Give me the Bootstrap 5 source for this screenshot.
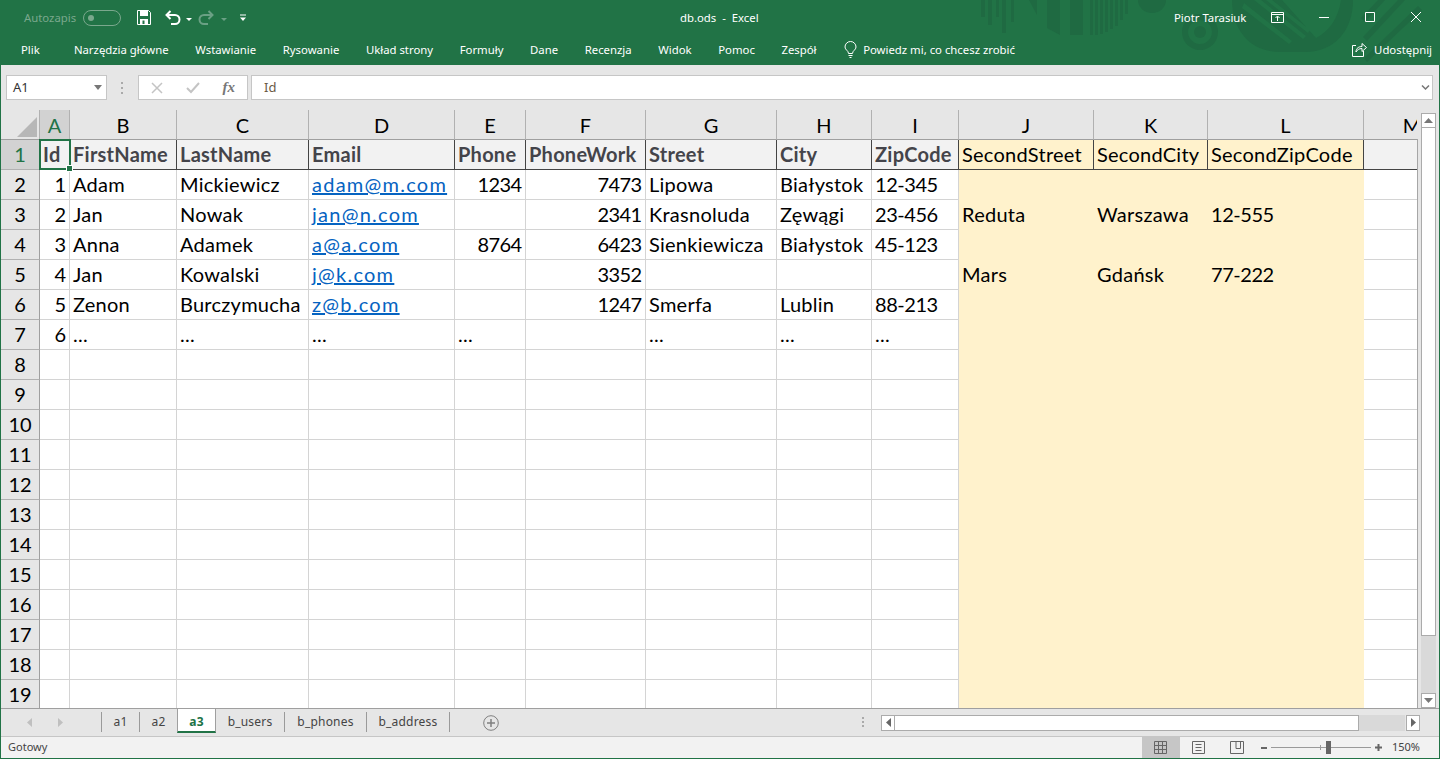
<!DOCTYPE html>
<html lang="pl"><head><meta charset="utf-8"><title>db.ods - Excel</title>
<link href="https://cdn.jsdelivr.net/npm/bootstrap@5.3.0/dist/css/bootstrap.min.css" rel="stylesheet">
<style>
html,body{height:759px;overflow:hidden;margin:0}
body{background:#e6e6e6;font-family:"Noto Sans","Open Sans",sans-serif;font-size:11.35px;color:#444}
.win{height:759px;width:1440px;border:solid #217346;border-width:0 1px 1px 1px;display:flex;flex-direction:column;overflow:hidden}
.greenbar{background:#217346;color:#fff;height:65px;margin:0 -1px;position:relative;flex:none}
.deco{position:absolute;left:960px;top:0}
.ttl{height:35px;position:relative;padding-left:24px;padding-right:19px}
.ttl .mid{position:absolute;left:680px;top:9px;white-space:pre}
.rib{height:30px;position:relative;padding-left:21px;gap:26.6px;padding-right:8px}
.rib .plik{margin-right:7.5px}
.tell{margin-left:1px}
.tell svg{margin-right:2px}
.aut{color:#7aa88d}
.sw{width:38px;height:16px;border:1px solid #7aa88d;border-radius:8px;position:relative;margin-left:7px}
.sw i{position:absolute;left:4px;top:4px;width:6px;height:6px;border-radius:50%;background:#7aa88d}
.i-save{margin-left:16px}
.i-undo{margin-left:14px}
.i-redo{margin-left:4px}
.i-more{margin-left:12px}
.rgt{gap:0}
.who{width:97px}
.ico-gap1{margin-left:35px}
.ico-gap2{margin-left:36px}
.share{gap:7px}
.fbar{height:45px;flex:none;padding:10px 6px 10px 5px}
.fbx{background:#fff;border:1px solid #c6c6c6;height:25px;font-size:13px;color:#333}
.nm{width:101px;padding:0 4px 0 6px}
.dotsep{width:31px}
.fxs{width:110px;padding:0 12px 0 12px}
.fx{font-family:"Liberation Serif",serif;font-style:italic;font-weight:700;color:#777;font-size:15px}
.finp{flex:1;padding-left:12px;padding-right:2px;color:#6b5a45;margin-left:3px}
.sheetarea{height:598px;flex:none;position:relative;overflow:hidden;background:#fff}
.gt{table-layout:fixed;border-collapse:separate;border-spacing:0;width:1460px;font-family:Lato,sans-serif;font-size:20px;color:#000;letter-spacing:.25px}
.gt td,.gt th{height:30px;padding:0 3px;border-right:1px solid #d4d4d4;border-bottom:1px solid #d4d4d4;line-height:29px;white-space:nowrap;overflow:hidden;font-weight:400;box-sizing:border-box}
.gt thead th{height:30px;background:#e6e6e6;border-right:1px solid #b1b1b1;border-bottom:1px solid #9f9f9f;text-align:center;line-height:28px;padding:0;position:relative;letter-spacing:0}
.gt thead th.ac{background:#d2d2d2;color:#217346;border-bottom:1px solid #217346}
.gt .rh{background:#e6e6e6;border-right:1px solid #9f9f9f;border-bottom:1px solid #b1b1b1;text-align:center;padding:0;font-weight:400;letter-spacing:0}
.gt .rh.ac{background:#d2d2d2;color:#217346;border-right:1px solid #217346}
.tri{position:absolute;right:2px;bottom:2px;width:0;height:0;border-style:solid;border-width:0 0 20px 20px;border-color:transparent transparent #b7b7b7 transparent}
.gt .hd{background:#f2f2f2;font-weight:700;color:#44444a;border-right:1px solid #444;border-bottom:1px solid #444}
.gt .hy{background:#fff2cc;color:#000;font-weight:400;border-right:1px solid #444;border-bottom:1px solid #444}
.gt .hb{background:#f2f2f2;border-right:0;border-bottom:1px solid #444}
.gt .y{background:#fff2cc;border-right:1px solid #fff2cc;border-bottom:1px solid #fff2cc}
.gt .num{text-align:right;letter-spacing:-.6px;padding-right:3.5px}
.gt .dg{letter-spacing:-.45px}
.gt a{color:#0563c1;letter-spacing:1.25px}
.sel{position:absolute;left:38px;top:29px;width:32px;height:31px;border:2px solid #217346;pointer-events:none}
.sel::after{content:"";position:absolute;right:-4px;bottom:-4px;width:7px;height:7px;background:#217346;border:1px solid #fff;box-sizing:border-box}
.vsb{position:absolute;right:0;top:0;bottom:0;width:22px;background:#e6e6e6;padding:3px 3px 0 4px}
.vsb::before{content:"";position:absolute;left:0;top:29px;bottom:0;width:1px;background:#a6a6a6}
.vb{height:15px;background:#fff;border:1px solid #ababab;flex:none}
.vth{background:#fff;border:1px solid #ababab;border-top:0;height:508px;flex:none}
.vtr{flex:1;background:#d9d9d9}
.tabs{height:29px;flex:none;border-top:1px solid #9f9f9f;background:#e6e6e6;position:relative;border-bottom:1px solid #c6c6c6;font-size:12px}
.navarr{margin-left:26px}
.tb{height:20px;line-height:20px;border-left:1px solid #9a9a9a;color:#444;flex:none;align-self:flex-start;margin-top:3px;text-align:center;letter-spacing:.2px}
.t1{margin-left:34px;width:38px}
.t2{width:38px}
.t3{width:39px;background:#fff;color:#217346;font-weight:700;height:24px;border:1px solid #9f9f9f;border-top:0;border-bottom:2px solid #217346;line-height:25px;margin-top:0}
.t4{width:68px;border-left:0}
.t5{width:82px}
.t6{width:84px;border-right:1px solid #9a9a9a}
.addsh{margin-left:33px}
.hsb{width:558px;height:16px;margin-left:auto;margin-right:19px}
.hdots{margin-right:16px}
.hb1{width:14px;height:16px;background:#fff;border:1px solid #ababab;flex:none}
.hth{width:464px;height:16px;background:#fff;border:1px solid #ababab;border-left:0;flex:none}
.htr{flex:1;background:#d9d9d9;height:16px;margin-right:1px}
.stat{height:21px;flex:none;background:#f2f2f2;padding-left:7px;padding-right:19px;font-size:11px;color:#444;position:relative}
.vw{height:21px;width:38px}
.vw.on{background:#c6c6c6}
.zmin{margin-left:5px}
.zm{width:100px;height:1px;background:#9a9a9a;position:relative;margin:0 4px}
.zm b{position:absolute;left:55px;top:-6px;width:5px;height:13px;background:#666}
.zm u{position:absolute;left:49px;top:-2px;width:1px;height:5px;background:#9a9a9a}
.pct{margin-left:10px}
</style></head><body>
<div class="win">
<div class="greenbar">
<svg class="deco" width="480" height="65" viewBox="0 0 480 65" fill="#1f6a42" aria-hidden="true">
<rect x="21" y="0" width="4" height="17"/><rect x="28" y="0" width="4" height="25"/><rect x="36" y="0" width="3" height="17"/><rect x="42" y="0" width="4" height="33"/><rect x="51" y="0" width="3" height="22"/>
<path d="M69 0h8v15zM87 0h13v35L87 28zM110 0h13v35h-13z"/>
<path d="M130 0h3v35h-3zM135 0h3v35h-3zM140 0h3v34h-3zM145 0h3v32h-3zM150 0h3v29h-3zM155 0h3v26h-3zM160 0h3v20h-3zM165 0h3v14h-3z"/>
<path d="M178 0h28a14 13 0 0 1-28 0z"/>
<path fill-rule="evenodd" d="M240 14a18 18 0 1 0 .01 0zM240 20a12 12 0 1 1-.01 0z"/><circle cx="240" cy="32" r="6"/>
<path d="M272 0C272 30 290 52 320 52H345C375 52 393 30 393 0z"/>
<path d="M322 0H381C378 20 368 32 356 38zM301 0l45 36-3 3-49-39zM284 3l48 38-3 3-47-36zM312 0l38 30-2 3-42-33z" fill="#217346"/>
<path d="M418 0h7l-20 22-4-4zM438 0h7l-38 41-4-4zM458 6l4 4-55 52-3-4z"/>
</svg>
<div class="ttl d-flex align-items-center">
<span class="aut">Autozapis</span><span class="sw"><i></i></span>
<svg class="i-save" width="14" height="15" viewBox="0 0 14 15" aria-hidden="true"><path d="M.5.5h11l2 2v12H.5z" fill="none" stroke="#fff"/><path d="M3 1h8v5H3zM3 9h8v5.500H3z" fill="#fff"/><rect x="5.500" y="10.500" width="2" height="3.500" fill="#217346"/></svg>
<svg class="i-undo" width="28" height="16" viewBox="0 0 28 16" aria-hidden="true"><path d="M2 5h8a4.500 4.500 0 0 1 0 9H6M5.500 1 1.500 5l4 4" fill="none" stroke="#fff" stroke-width="2"/><path d="M21 8h6l-3 3z" fill="#fff"/></svg>
<svg class="i-redo" width="30" height="16" viewBox="0 0 30 16" aria-hidden="true"><path d="M15 5H7a4.500 4.500 0 0 0 0 9h4M11.500 1l4 4-4 4" fill="none" stroke="#6aa084" stroke-width="2"/><path d="M24 8h6l-3 3z" fill="#6aa084"/></svg>
<svg class="i-more" width="8" height="10" viewBox="0 0 8 10" aria-hidden="true"><path d="M1 1.500h6v1H1zM1 4.500h6L4 8z" fill="#fff"/></svg>
<span class="mid">db.ods  -  Excel</span>
<div class="ms-auto d-flex align-items-center rgt">
<span class="who">Piotr Tarasiuk</span>
<svg width="13" height="11" viewBox="0 0 13 11" aria-hidden="true"><path d="M.5.500h12v10H.5zM.5 2.500h12M6.500 9V4.500M4.500 6l2-2 2 2" fill="none" stroke="#fff"/></svg>
<svg class="ico-gap1" width="10" height="10" viewBox="0 0 10 10" aria-hidden="true"><path d="M0 5.500h10" stroke="#fff"/></svg>
<svg class="ico-gap2" width="10" height="10" viewBox="0 0 10 10" aria-hidden="true"><path d="M.5.500h9v9h-9z" fill="none" stroke="#fff"/></svg>
<svg class="ico-gap2" width="10" height="10" viewBox="0 0 10 10" aria-hidden="true"><path d="M0 0l10 10M10 0 0 10" stroke="#fff"/></svg>
</div>
</div>
<div class="rib d-flex align-items-center">
<span class="plik">Plik</span><span>Narzędzia główne</span><span>Wstawianie</span><span>Rysowanie</span><span>Układ strony</span><span>Formuły</span><span>Dane</span><span>Recenzja</span><span>Widok</span><span>Pomoc</span><span>Zespół</span>
<span class="d-flex align-items-center gap-1 tell"><svg width="13" height="17" viewBox="0 0 13 17" aria-hidden="true"><path d="M4.500 12.500C4.500 9.500 1 9 1 6a5.500 5.500 0 0 1 11 0c0 3-3.500 3.500-3.500 6.500zM4.500 14.500h4M5.500 16.500h2" fill="none" stroke="#fff"/></svg>Powiedz mi, co chcesz zrobić</span>
<span class="ms-auto d-flex align-items-center share"><svg width="15" height="15" viewBox="0 0 15 15" aria-hidden="true"><path d="M4 3.500H.5v11h11V9M4 10c0-4 3-5.500 6-5.500V1.500l4.500 4-4.500 4V6.500C7 6.500 5 8 4 10z" fill="none" stroke="#fff"/></svg>Udostępnij</span>
</div>
</div>
<div class="fbar d-flex align-items-center">
<div class="fbx nm d-flex align-items-center justify-content-between"><span>A1</span><svg width="8" height="5" viewBox="0 0 8 5" aria-hidden="true"><path d="M0 0h8L4 5z" fill="#777"/></svg></div>
<div class="dotsep d-flex justify-content-center"><svg width="3" height="12" viewBox="0 0 3 12" aria-hidden="true"><path d="M0 0h2v2H0zM0 5h2v2H0zM0 10h2v2H0z" fill="#aaa"/></svg></div>
<div class="fbx fxs d-flex align-items-center justify-content-between"><svg width="12" height="12" viewBox="0 0 12 12" aria-hidden="true"><path d="M1 1l10 10M11 1 1 11" stroke="#c4c4c4" stroke-width="1.500"/></svg><svg width="14" height="12" viewBox="0 0 14 12" aria-hidden="true"><path d="M1 6l4 4 8-9" fill="none" stroke="#c4c4c4" stroke-width="2"/></svg><span class="fx">fx</span></div>
<div class="fbx finp d-flex align-items-center justify-content-between"><span>Id</span><svg width="9" height="5" viewBox="0 0 9 5" aria-hidden="true"><path d="M1 .5l3.500 3.500L8 .5" fill="none" stroke="#777" stroke-width="1.500"/></svg></div>
</div>
<div class="sheetarea">
<table class="gt">
<colgroup><col width="39"><col width="30"><col width="107"><col width="132"><col width="146"><col width="71"><col width="120"><col width="131"><col width="95"><col width="87"><col width="135"><col width="114"><col width="156"><col width="97"></colgroup>
<thead><tr><th><span class="tri"></span></th><th class="ac">A</th><th>B</th><th>C</th><th>D</th><th>E</th><th>F</th><th>G</th><th>H</th><th>I</th><th>J</th><th>K</th><th>L</th><th>M</th></tr></thead>
<tbody id="tb"></tbody></table>
<div class="sel"></div>
<div class="vsb d-flex flex-column"><div class="vb d-flex align-items-center justify-content-center"><svg width="9" height="5" viewBox="0 0 9 5" aria-hidden="true"><path d="M4.500 0 9 5H0z" fill="#777"/></svg></div><div class="vth"></div><div class="vtr"></div><div class="vb d-flex align-items-center justify-content-center"><svg width="9" height="5" viewBox="0 0 9 5" aria-hidden="true"><path d="M4.500 5 9 0H0z" fill="#777"/></svg></div></div>
</div>
<div class="tabs d-flex align-items-center">
<svg class="navarr flex-shrink-0" width="40" height="9" viewBox="0 0 40 9" aria-hidden="true"><path d="M5 0v9L0 4.500zM31 0v9l5-4.500z" fill="#c0c0c0"/></svg>
<div class="tb t1">a1</div><div class="tb t2">a2</div><div class="tb t3">a3</div><div class="tb t4">b_users</div><div class="tb t5">b_phones</div><div class="tb t6">b_address</div>
<svg class="addsh flex-shrink-0" width="16" height="16" viewBox="0 0 16 16" aria-hidden="true"><circle cx="8" cy="8" r="7.300" fill="none" stroke="#808080"/><path d="M8 4v8M4 8h8" stroke="#808080" stroke-width="1.500"/></svg>
<div class="hsb d-flex align-items-center">
<svg class="hdots" width="3" height="11" viewBox="0 0 3 11" aria-hidden="true"><path d="M0 0h2v2H0zM0 4h2v2H0zM0 8h2v2H0z" fill="#aaa"/></svg>
<div class="hb1 d-flex align-items-center justify-content-center"><svg width="5" height="9" viewBox="0 0 5 9" aria-hidden="true"><path d="M5 0v9L0 4.500z" fill="#666"/></svg></div><div class="hth"></div><div class="htr"></div><div class="hb1 d-flex align-items-center justify-content-center"><svg width="5" height="9" viewBox="0 0 5 9" aria-hidden="true"><path d="M0 0v9l5-4.500z" fill="#666"/></svg></div></div>
</div>
<div class="stat d-flex align-items-center">
<span>Gotowy</span>
<div class="ms-auto d-flex align-items-center">
<div class="vw on d-flex align-items-center justify-content-center"><svg width="13" height="13" viewBox="0 0 13 13" aria-hidden="true"><path d="M.5.500h12v12H.5zM.5 4.500h12M.5 8.500h12M4.500.5v12M8.500.5v12" fill="none" stroke="#666"/></svg></div>
<div class="vw d-flex align-items-center justify-content-center"><svg width="13" height="13" viewBox="0 0 13 13" aria-hidden="true"><path d="M.5.500h12v12H.5zM3.500 3.500h6M3.500 6.500h6M3.500 9.500h6" fill="none" stroke="#666"/></svg></div>
<div class="vw d-flex align-items-center justify-content-center"><svg width="14" height="13" viewBox="0 0 14 13" aria-hidden="true"><path d="M.5.500h13v12H.5zM6 .5v7h4.500V.5" fill="none" stroke="#666"/></svg></div>
<svg class="zmin" width="6" height="2" viewBox="0 0 6 2" aria-hidden="true"><rect width="6" height="2" fill="#666"/></svg>
<div class="zm"><u></u><b></b></div>
<svg width="7" height="7" viewBox="0 0 7 7" aria-hidden="true"><path d="M2.500 0h2v2.500H7v2H4.500V7h-2V4.500H0v-2h2.500z" fill="#666"/></svg>
<span class="pct">150%</span>
</div>
</div>
</div>
<script>
const D=[['Adam','Mickiewicz','adam@m.com','1234','7473','Lipowa','Białystok','12-345','','',''],
['Jan','Nowak','jan@n.com','','2341','Krasnoluda','Zęwągi','23-456','Reduta','Warszawa','12-555'],
['Anna','Adamek','a@a.com','8764','6423','Sienkiewicza','Białystok','45-123','','',''],
['Jan','Kowalski','j@k.com','','3352','','','','Mars','Gdańsk','77-222'],
['Zenon','Burczymucha','z@b.com','','1247','Smerfa','Lublin','88-213','','',''],
['...','...','...','...','','...','...','...','','','']];
const H=['Id','FirstName','LastName','Email','Phone','PhoneWork','Street','City','ZipCode','SecondStreet','SecondCity','SecondZipCode'];
let h='<tr><th class="rh ac">1</th>';
H.forEach((x,i)=>h+=`<td class="${i>8?'hy':'hd'}">${x}</td>`);h+='<td class="hb"></td></tr>';
for(let r=0;r<18;r++){h+=`<tr><th class="rh">${r+2}</th>`;const d=D[r];
 for(let c=0;c<12;c++){let v='',cl=c>8?'y':'';
  if(c==0&&d)v=r+1,cl='num';
  if(c>0&&d){v=d[c-1];if(c==3&&v!='...')v=`<a href="#">${v}</a>`;if((c==4&&v!='...')||c==5)cl='num';if((c==8&&v!='...')||c==11)cl+=' dg';}
  h+=`<td class="${cl}">${v}</td>`;}
 h+='<td></td></tr>';}
document.getElementById('tb').innerHTML=h;
</script>
<script src="https://cdn.jsdelivr.net/npm/bootstrap@5.3.0/dist/js/bootstrap.bundle.min.js"></script>
</body></html>
